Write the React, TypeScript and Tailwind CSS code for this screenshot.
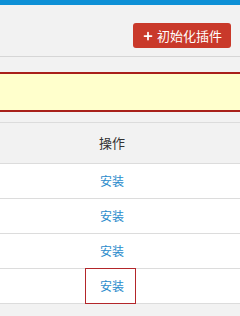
import { Plus } from "lucide-react";

const rows = ["安装", "安装", "安装", "安装"];

export default function App() {
  return (
    <div
      className="w-[240px] h-[316px] overflow-hidden bg-[#f2f2f2] text-[#333]"
      style={{ fontFamily: '"Noto Sans CJK SC", "Noto Sans", sans-serif' }}
    >
      {/* top bar */}
      <div className="h-[5px] bg-[#0e90d6]" />

      {/* toolbar */}
      <div className="h-[52px] flex items-start justify-end pt-[18px] pr-[9px] border-b border-[#d6d6d6]">
        <button className="h-[25px] w-[98px] rounded-[3px] bg-[#c9392a] text-white text-[13px] flex items-center justify-center gap-[3px]">
          <Plus className="w-[12px] h-[12px]" strokeWidth={3.5} />
          <span>初始化插件</span>
        </button>
      </div>

      {/* notice */}
      <div className="mt-[15px] h-[40px] bg-[#ffffcc] border-y-2 border-[#a8201a]" />

      {/* table */}
      <div className="mt-[10px] border-t border-[#dcdcdc]">
        <div className="h-[41px] flex items-center border-b border-[#dcdcdc]">
          <div className="w-[224px] text-center text-[13px] text-[#333]">操作</div>
        </div>
        {rows.map((r, i) => (
          <div
            key={i}
            className="relative h-[35px] flex items-center bg-white border-b border-[#dcdcdc]"
          >
            <div className="w-[224px] text-center text-[12px] text-[#2a8bcc]">{r}</div>
            {i === rows.length - 1 && (
              <div className="absolute left-[85px] top-[-1px] w-[51px] h-[36px] border border-[#b3262a]" />
            )}
          </div>
        ))}
      </div>
    </div>
  );
}
